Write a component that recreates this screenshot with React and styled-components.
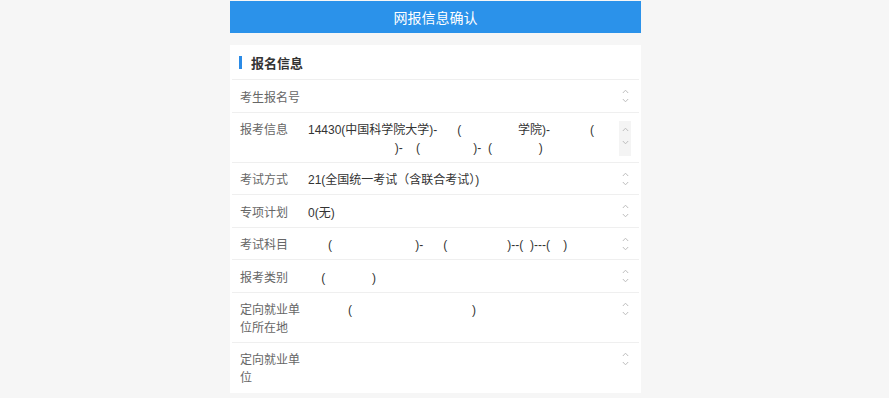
import React from 'react';
import styled, { createGlobalStyle } from 'styled-components';

const Global = createGlobalStyle`
  html, body { margin: 0; padding: 0; background: #f6f6f6; }
  body { font-family: "Liberation Sans", "Noto Sans CJK SC", sans-serif; }
`;

const Page = styled.div`
  width: 411px;
  margin-left: 230px;
  padding-top: 1px;
`;

const Header = styled.div`
  height: 32px;
  background: #2b92ea;
  color: #fff;
  font-size: 14px;
  display: flex;
  align-items: center;
  justify-content: center;
`;

const Card = styled.div`
  margin-top: 12px;
  background: #fff;
  padding: 0 2px 1px;
`;

const SectionTitle = styled.div`
  height: 35px;
  display: flex;
  align-items: center;
  padding-left: 7px;
  padding-top: 1px;
  box-sizing: border-box;
  border-bottom: 1px solid #efefef;
  font-size: 13px;
  font-weight: bold;
  color: #333;
`;

const Bar = styled.span`
  width: 3px;
  height: 13px;
  background: #2b8be6;
  margin-right: 9px;
`;

const Row = styled.div`
  display: flex;
  align-items: flex-start;
  padding: 9.5px 8px 4.5px;
  border-bottom: ${p => (p.$last ? 'none' : '1px solid #efefef')};
  font-size: 12px;
  line-height: 17.5px;
`;

const Label = styled.div`
  width: 62px;
  flex-shrink: 0;
  margin-right: 6px;
  color: #666;
`;

const Value = styled.div`
  flex: 1;
  display: flex;
  align-items: stretch;
  min-height: 17.5px;
`;

const ValueText = styled.div`
  flex: 1;
  white-space: pre;
  color: #333;
`;

const Spinner = styled.div`
  width: 12px;
  display: flex;
  flex-direction: column;
  background: ${p => (p.$track ? '#f4f4f4' : 'transparent')};
  margin-top: ${p => (p.$track ? '-1px' : '-2px')};
  margin-bottom: ${p => (p.$track ? '1px' : '0')};
`;

const Half = styled.div`
  flex: 1;
  display: flex;
  justify-content: center;
  align-items: ${p => (p.$down ? 'flex-start' : 'center')};
  padding-top: ${p => (p.$down ? '2px' : '0')};
`;

const Chevron = ({ down }) => (
  <svg width="7" height="5" viewBox="0 0 7 5">
    <polyline
      points={down ? '0.8,1 3.5,3.8 6.2,1' : '0.8,4 3.5,1.2 6.2,4'}
      fill="none"
      stroke="#bdbdbd"
      strokeWidth="1"
    />
  </svg>
);

const SpinBox = ({ track }) => (
  <Spinner $track={track}>
    <Half><Chevron /></Half>
    <Half $down><Chevron down /></Half>
  </Spinner>
);

const sp = n => ' '.repeat(n);

const rows = [
  { label: '考生报名号', value: '' },
  {
    label: '报考信息',
    value:
      '14430(中国科学院大学)-' + sp(6) + '(' + sp(17) + '学院)-' + sp(12) + '(\n' +
      sp(26) + ')-' + sp(4) + '(' + sp(16) + ')-' + sp(2) + '(' + sp(14) + ')',
    track: true,
  },
  { label: '考试方式', value: '21(全国统一考试（含联合考试）)' },
  { label: '专项计划', value: '0(无)' },
  {
    label: '考试科目',
    value: sp(6) + '(' + sp(25) + ')-' + sp(6) + '(' + sp(18) + ')--(' + sp(2) + ')---(' + sp(4) + ')',
  },
  { label: '报考类别', value: sp(4) + '(' + sp(14) + ')' },
  { label: '定向就业单位所在地', value: sp(12) + '(' + sp(36) + ')' },
  { label: '定向就业单位', value: '' },
];

export default function App() {
  return (
    <>
      <Global />
      <Page>
        <Header>网报信息确认</Header>
        <Card>
          <SectionTitle>
            <Bar />
            报名信息
          </SectionTitle>
          {rows.map((r, i) => (
            <Row key={r.label} $last={i === rows.length - 1}>
              <Label>{r.label}</Label>
              <Value>
                <ValueText>{r.value}</ValueText>
                <SpinBox track={r.track} />
              </Value>
            </Row>
          ))}
        </Card>
      </Page>
    </>
  );
}
